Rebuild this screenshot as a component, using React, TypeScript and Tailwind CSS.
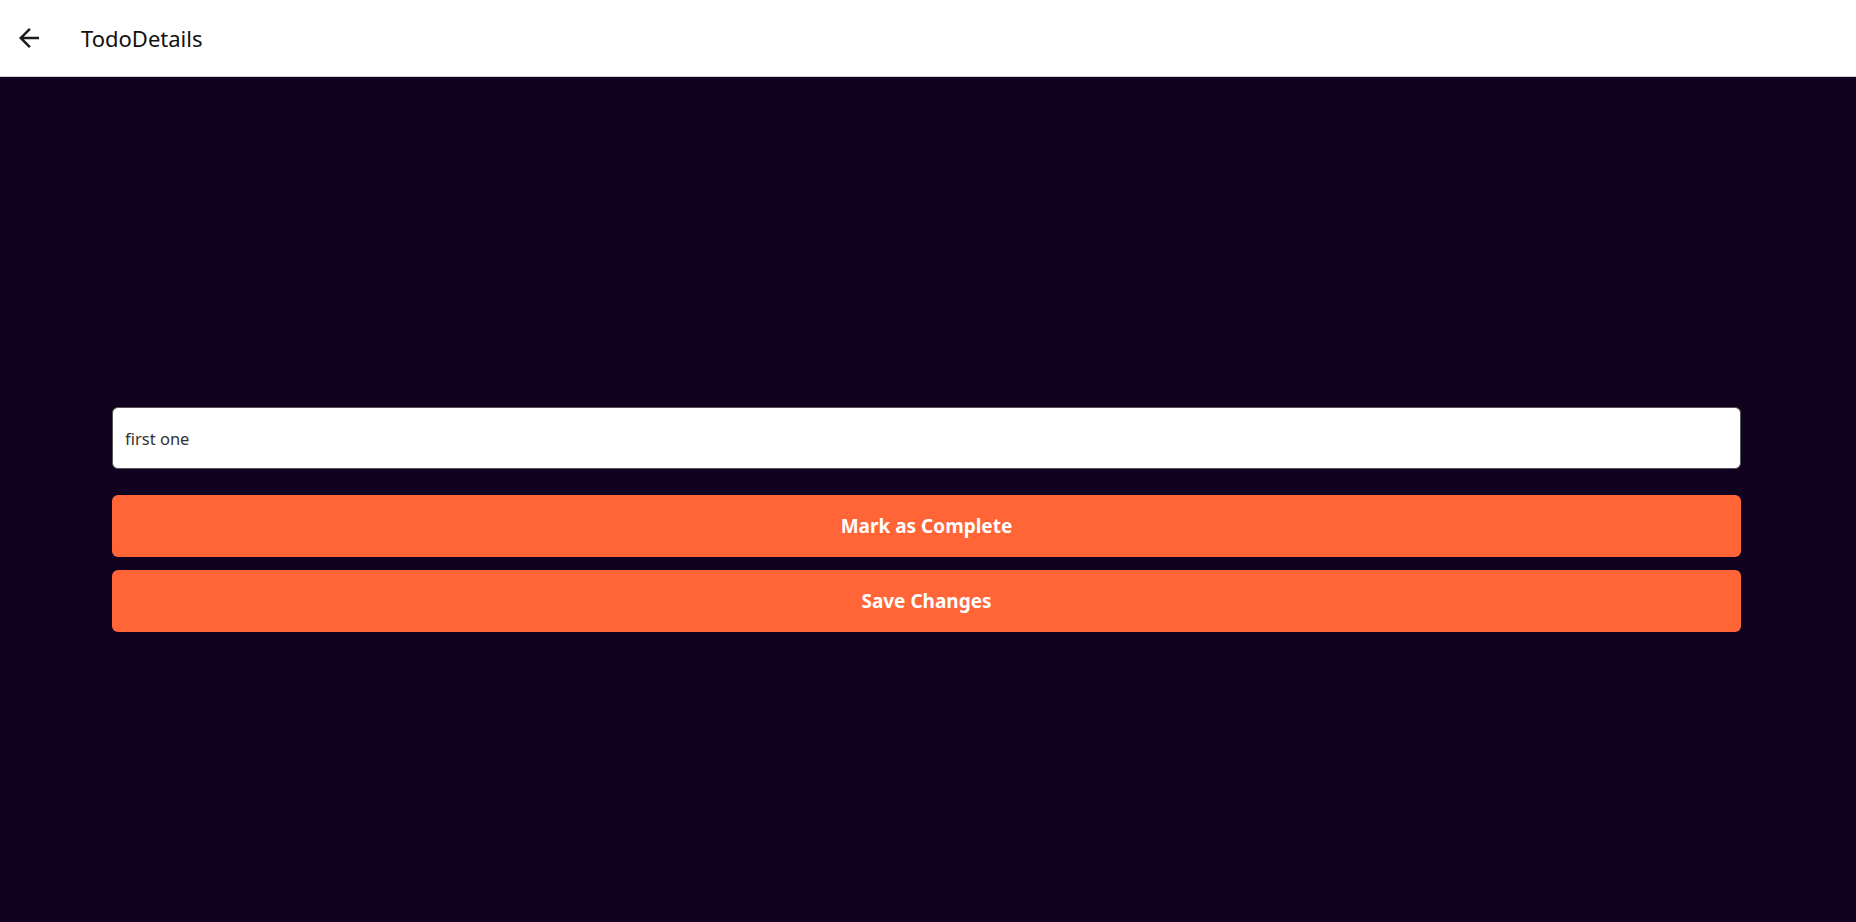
export default function App() {
    return (
        <div className="min-h-screen flex flex-col bg-[#11021f]" style={{ fontFamily: '"Noto Sans", "Open Sans", sans-serif' }}>
            {/* Top bar */}
            <header className="h-[77px] shrink-0 bg-white border-b border-[#d4d4d4] flex items-center">
                <button className="ml-[14px] w-[30px] h-[30px] flex items-center justify-center text-[#1c1c1c]">
                    <svg width="30" height="30" viewBox="0 0 24 24" fill="currentColor">
                        <path d="M20 11H7.83l5.59-5.59L12 4l-8 8 8 8 1.41-1.41L7.83 13H20v-2z" />
                    </svg>
                </button>
                <h1 className="ml-[37px] text-[22px] text-[#111] leading-none">TodoDetails</h1>
            </header>

            {/* Form */}
            <main className="flex-1 flex flex-col pt-[330px] pl-[112px] pr-[115px]">
                <input
                    defaultValue="first one"
                    className="h-[62px] rounded-[6px] bg-white border border-[#555] px-[12px] text-[16.5px] text-[#333] outline-none"
                />
                <button className="mt-[26px] h-[62px] rounded-[6px] bg-[#ff6536] text-white font-bold text-[19px]">
                    Mark as Complete
                </button>
                <button className="mt-[13px] h-[62px] rounded-[6px] bg-[#ff6536] text-white font-bold text-[19px]">
                    Save Changes
                </button>
            </main>
        </div>
    )
}
